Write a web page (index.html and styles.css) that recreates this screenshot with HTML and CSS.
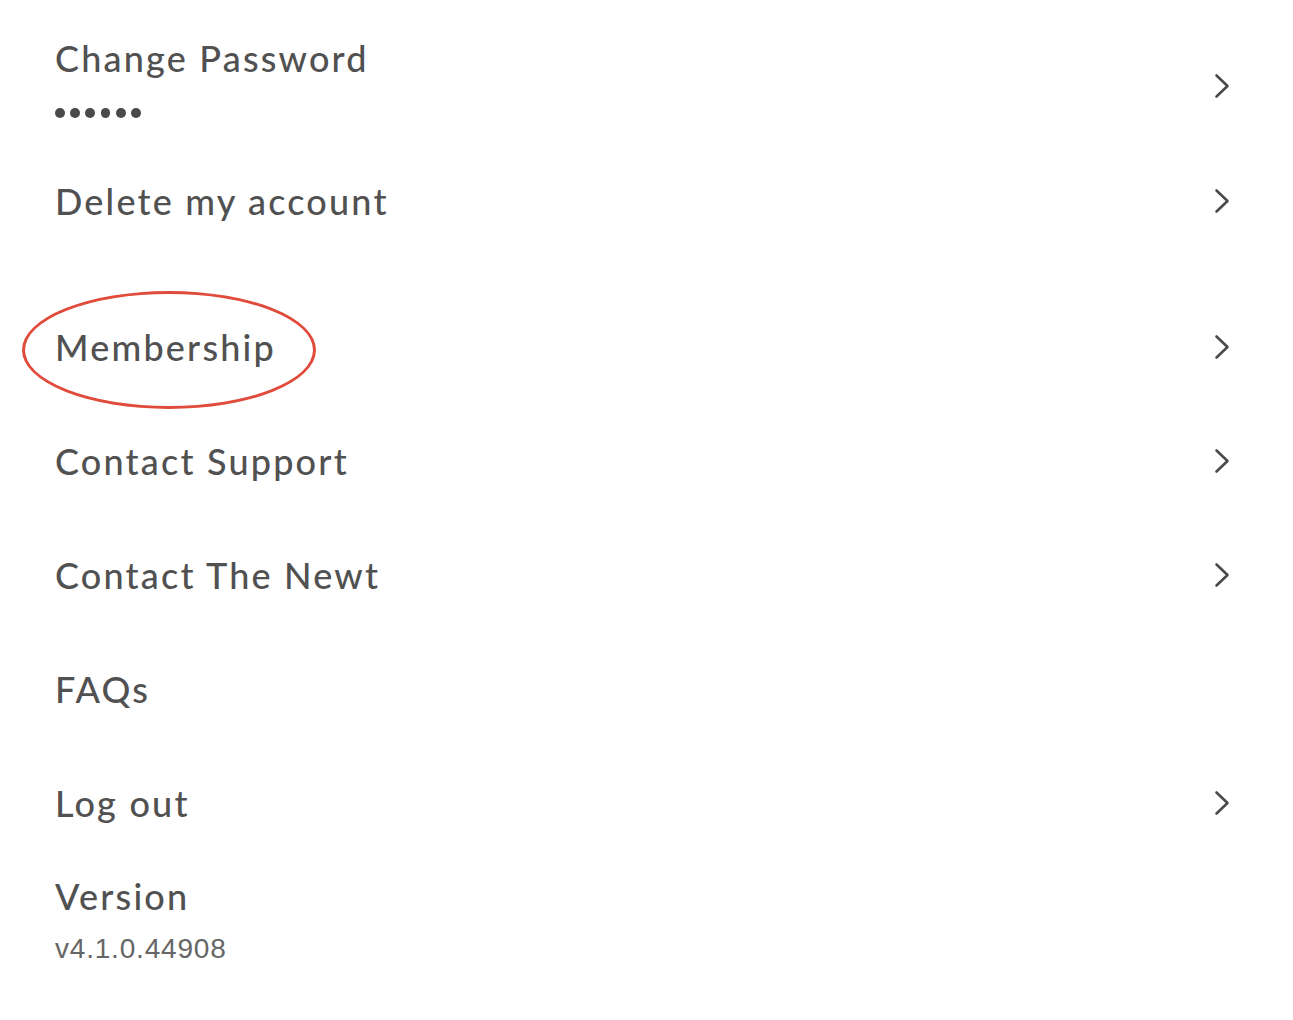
FILE: index.html
```html
<!DOCTYPE html>
<html lang="en">
<head>
<meta charset="utf-8">
<title>Account settings</title>
<link rel="stylesheet" href="styles.css">
</head>
<body>
<main class="settings">
  <a class="row row-first" href="#">
    <div class="row-text">
      <span class="label">Change Password</span>
      <span class="dots" aria-label="password hidden"><i></i><i></i><i></i><i></i><i></i><i></i></span>
    </div>
    <svg class="chev" viewBox="0 0 16 26" width="16" height="26" aria-hidden="true"><path d="M2.5 2.5 L13.5 13 L2.5 23.5"/></svg>
  </a>
  <a class="row" href="#">
    <span class="label">Delete my account</span>
    <svg class="chev" viewBox="0 0 16 26" width="16" height="26" aria-hidden="true"><path d="M2.5 2.5 L13.5 13 L2.5 23.5"/></svg>
  </a>
  <div class="spacer"></div>
  <a class="row" href="#">
    <span class="label circled">Membership</span>
    <svg class="chev" viewBox="0 0 16 26" width="16" height="26" aria-hidden="true"><path d="M2.5 2.5 L13.5 13 L2.5 23.5"/></svg>
  </a>
  <a class="row" href="#">
    <span class="label">Contact Support</span>
    <svg class="chev" viewBox="0 0 16 26" width="16" height="26" aria-hidden="true"><path d="M2.5 2.5 L13.5 13 L2.5 23.5"/></svg>
  </a>
  <a class="row" href="#">
    <span class="label">Contact The Newt</span>
    <svg class="chev" viewBox="0 0 16 26" width="16" height="26" aria-hidden="true"><path d="M2.5 2.5 L13.5 13 L2.5 23.5"/></svg>
  </a>
  <a class="row" href="#">
    <span class="label">FAQs</span>
  </a>
  <a class="row" href="#">
    <span class="label">Log out</span>
    <svg class="chev" viewBox="0 0 16 26" width="16" height="26" aria-hidden="true"><path d="M2.5 2.5 L13.5 13 L2.5 23.5"/></svg>
  </a>
  <div class="version">
    <span class="label">Version</span>
    <span class="version-num">v4.1.0.44908</span>
  </div>
</main>
</body>
</html>
```
FILE: styles.css
```css
html, body {
  margin: 0;
  padding: 0;
  background: #ffffff;
}
body {
  font-family: "Lato", "Noto Sans", sans-serif;
  color: #515151;
}
.settings {
  display: flex;
  flex-direction: column;
  padding: 28px 63px 0 55px;
}
.row {
  display: flex;
  align-items: center;
  justify-content: space-between;
  height: 114px;
  text-decoration: none;
  color: inherit;
}
.row-first {
  height: 116px;
}
.row-text {
  display: flex;
  flex-direction: column;
  padding-bottom: 14px;
}
.label {
  font-size: 36px;
  line-height: 36px;
  font-weight: 500;
  letter-spacing: 2.2px;
  white-space: nowrap;
}
.dots {
  display: flex;
  gap: 5.4px;
  margin-top: 32px;
  height: 10px;
}
.dots i {
  width: 9.8px;
  height: 9.8px;
  border-radius: 50%;
  background: #4a4a4a;
}
.spacer {
  height: 32px;
}
.chev {
  flex: none;
  fill: none;
  stroke: #4a4a4a;
  stroke-width: 2.6;
  stroke-linecap: round;
  stroke-linejoin: round;
}
.circled {
  position: relative;
}
.circled::before {
  content: "";
  position: absolute;
  left: -33px;
  top: -38px;
  width: 288px;
  height: 112px;
  border: 3px solid #e04b3c;
  border-radius: 50%;
}
.version {
  display: flex;
  flex-direction: column;
  padding-top: 18px;
}
.version-num {
  margin-top: 20px;
  font-family: "Liberation Sans", Arial, sans-serif;
  font-size: 28px;
  line-height: 30px;
  letter-spacing: 0.8px;
  color: #666666;
}
```
